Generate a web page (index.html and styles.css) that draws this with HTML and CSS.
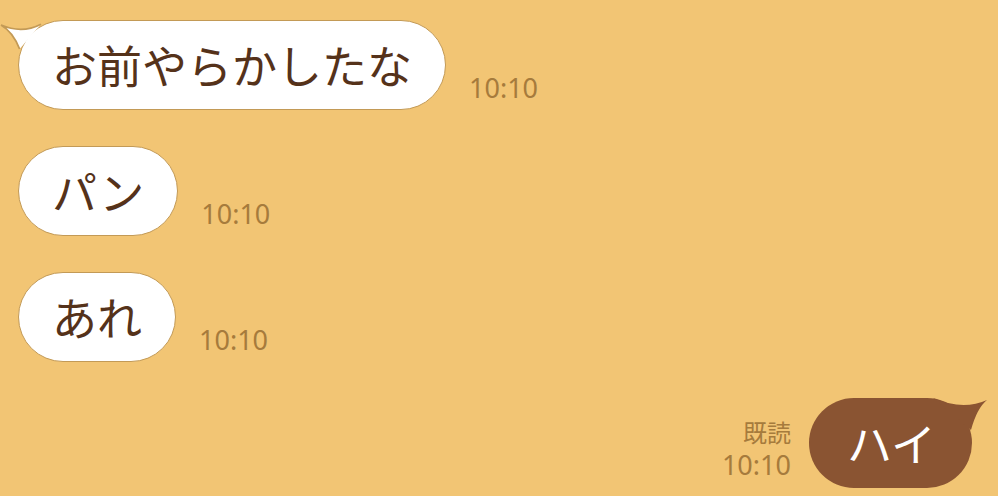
FILE: index.html
```html
<!DOCTYPE html>
<html lang="ja">
<head>
  <meta charset="UTF-8">
  <title>Chat</title>
  <link rel="stylesheet" href="styles.css">
</head>
<body>
  <div class="chat">
    <!-- received -->
    <div class="row">
      <div class="bubble in first">
        <svg class="tail-in" width="60" height="40" viewBox="0 0 60 40">
          <path d="M41 5.2 Q22 15 1 6 Q13 13 19.6 30" fill="#fff" stroke="#c39a56" stroke-width="1.8"/>
        </svg>
        お前やらかしたな
      </div>
      <div class="meta"><span class="time">10:10</span></div>
    </div>

    <div class="row">
      <div class="bubble in">パン</div>
      <div class="meta"><span class="time">10:10</span></div>
    </div>

    <div class="row">
      <div class="bubble in">あれ</div>
      <div class="meta"><span class="time">10:10</span></div>
    </div>

    <!-- sent -->
    <div class="row mine">
      <div class="meta right">
        <span class="read">既読</span>
        <span class="time">10:10</span>
      </div>
      <div class="bubble out first">
        <svg class="tail-out" width="60" height="40" viewBox="0 0 60 40">
          <path d="M3 0.1 Q33 13 57 2 Q47 10 41 32 Z" fill="#8a5432"/>
        </svg>
        ハイ
      </div>
    </div>
  </div>
</body>
</html>
```

FILE: styles.css
```css
body {
  margin: 0;
  background: #f2c574;
  font-family: "Noto Sans CJK JP", "Noto Sans", sans-serif;
  overflow: hidden;
}

.chat {
  display: flex;
  flex-direction: column;
  gap: 36px;
  padding: 20px 26px 0 18px;
}

.row {
  display: flex;
  align-items: flex-end;
  gap: 23px;
}

.row.mine {
  justify-content: flex-end;
  gap: 18px;
}

.bubble {
  position: relative;
  box-sizing: border-box;
  height: 90px;
  padding: 0 33px;
  border-radius: 45px;
  font-size: 45px;
  line-height: 87px;
  white-space: nowrap;
}

.bubble.in {
  background: #fff;
  color: #55321a;
  border: 1.8px solid #c39a56;
}

.bubble.out {
  background: #8a5432;
  color: #fff;
  padding: 0 36px 0 38px;
  line-height: 90px;
}

.tail-in {
  position: absolute;
  left: -18.8px;
  top: -1.8px;
}

.tail-out {
  position: absolute;
  left: 121px;
  top: 0;
}

.meta {
  display: flex;
  flex-direction: column;
  padding-bottom: 6px;
  color: #a67b3c;
  font-size: 27px;
  line-height: 32px;
}

.time {
  font-family: "Noto Sans", sans-serif;
}

.meta.right {
  align-items: flex-end;
  padding-bottom: 7px;
}

.read {
  font-size: 24px;
  line-height: 34px;
}
```
